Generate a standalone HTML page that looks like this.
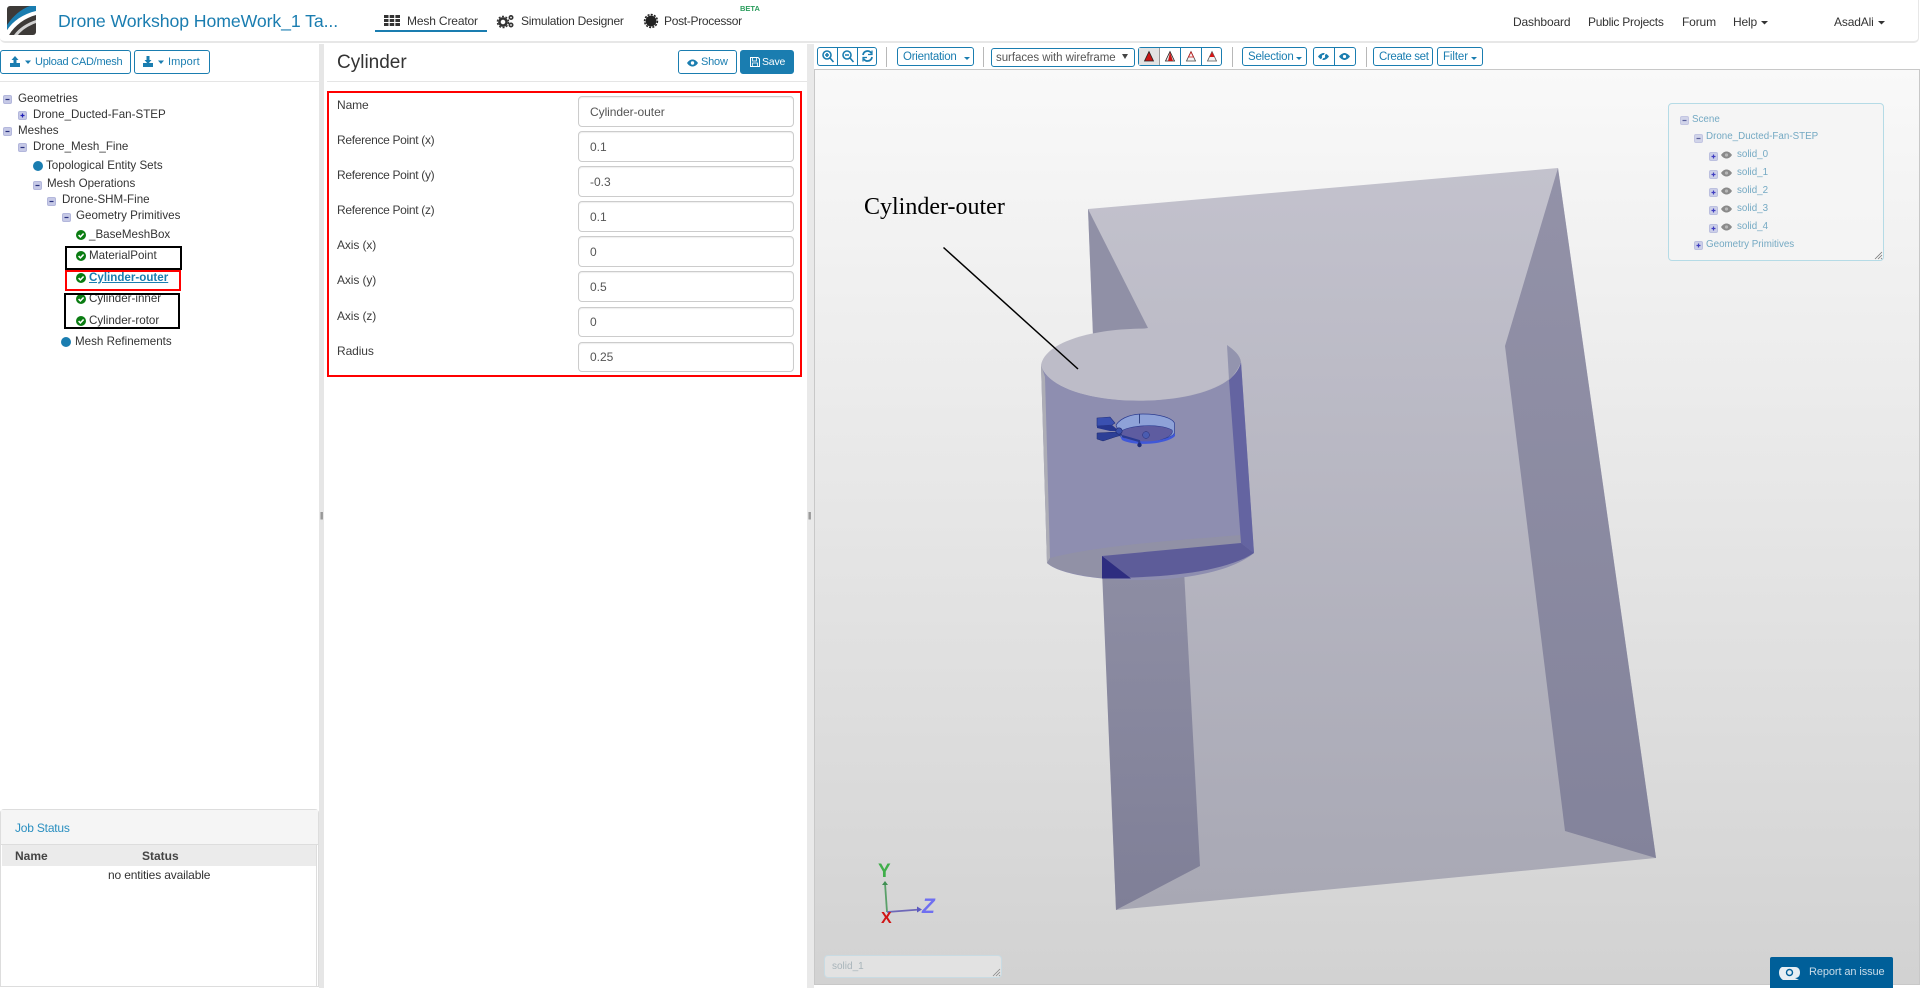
<!DOCTYPE html>
<html lang="en"><head><meta charset="utf-8"><title>Mesh Creator</title>
<style>
html,body{margin:0;padding:0;background:#fff;width:1920px;height:988px;overflow:hidden}
body{position:relative;font-family:"Liberation Sans",Arial,sans-serif;color:#333}
.a{position:absolute}
.t{position:absolute;white-space:nowrap;line-height:16px;font-size:11.6px;color:#333}
.l{font-size:12px;color:#3c3c3c;letter-spacing:-.1px}
.n{font-size:12px;color:#333;letter-spacing:-.15px}
.b{position:absolute;box-sizing:border-box;border:1px solid #1a7db0;border-radius:3px;background:#fff;color:#1a7db0;font-size:11px;white-space:nowrap}
.i{position:absolute;box-sizing:border-box;left:578px;width:216px;border:1px solid #ccc;border-radius:4px;background:#fff;box-shadow:inset 0 1px 1px rgba(0,0,0,.07);font-size:12px;color:#555;padding-left:11px}
.s{position:absolute;width:1px;height:20px;background:#b8b8b8;top:47px}
.tr{position:absolute;white-space:nowrap;line-height:14px;font-size:9.8px;color:#74a9c3}
.box{position:absolute;box-sizing:border-box;border:2px solid #000}
svg{position:absolute;overflow:visible}
</style></head><body>
<svg width="0" height="0" style="left:0;top:0"><defs>
<g id="mi"><rect x=".5" y=".5" width="8" height="8" rx="1.5" fill="#c6c9e6" stroke="#b3b7dc"/><path d="M2.5 4.5h4" stroke="#28307e" stroke-width="1.2"/></g>
<g id="pl"><rect x=".5" y=".5" width="8" height="8" rx="1.5" fill="#c6c9e6" stroke="#b3b7dc"/><path d="M2.5 4.5h4M4.5 2.5v4" stroke="#2220b8" stroke-width="1.2"/></g>
<g id="ck"><circle cx="5" cy="5" r="5" fill="#0a7c12"/><path d="M2.6 5.1l1.8 1.8 3.2-3.4" fill="none" stroke="#fff" stroke-width="1.6"/></g>
<g id="ey"><path d="M0 4C2 1 4 .5 5.5 .5S9 1 11 4C9 7 7 7.5 5.5 7.5S2 7 0 4z" fill="#8a8a8a"/><circle cx="5.5" cy="4" r="1.6" fill="#b8b8b8"/></g>
</defs></svg>

<!-- navbar -->
<div class="a" style="left:0;top:0;width:1919px;height:43px;box-sizing:border-box;border-bottom:2px solid #e7e7e7;border-right:1px solid #e7e7e7;border-radius:0 0 5px 5px"></div>
<svg style="left:7px;top:6px" width="29" height="29" viewBox="0 0 29 29"><rect width="29" height="29" rx="3" fill="#3d3a38"/><path d="M0 24C6 15 15 8 29 4v5C18 12 8 19 2 29H0z" fill="#fff"/><path d="M0 19C6 10 14 3 23 0h6v5C16 8 6 15 0 24z" fill="#1a7db0"/><path d="M7 29C12 22 20 17 29 14v3C21 20 15 24 11 29z" fill="#d0d0d0"/></svg>
<div class="t" style="left:58px;top:10px;line-height:22px;font-size:17.7px;color:#1a7db0;letter-spacing:-.1px">Drone Workshop HomeWork_1 Ta...</div>

<svg style="left:384px;top:15px" width="16" height="11" fill="#333"><path d="M0 0h4.5v3H0zM5.7 0h4.5v3H5.7zM11.4 0H16v3h-4.6zM0 4h4.5v3H0zM5.7 4h4.5v3H5.7zM11.4 4H16v3h-4.6zM0 8h4.5v3H0zM5.7 8h4.5v3H5.7zM11.4 8H16v3h-4.6z"/></svg>
<div class="t n" style="left:407px;top:13px;letter-spacing:-.15px">Mesh Creator</div>
<div class="a" style="left:375px;top:30px;width:112px;height:2px;background:#1a7db0"></div>
<svg style="left:497px;top:14px" width="17" height="14"><circle cx="6" cy="8" r="3.6" fill="none" stroke="#333" stroke-width="2.6"/><circle cx="6" cy="8" r="5.6" fill="none" stroke="#333" stroke-width="1.4" stroke-dasharray="2 1.6"/><circle cx="14" cy="3.5" r="1.7" fill="none" stroke="#333" stroke-width="1.6"/><circle cx="14" cy="11" r="1.7" fill="none" stroke="#333" stroke-width="1.6"/></svg>
<div class="t n" style="left:521px;top:13px;letter-spacing:-.25px">Simulation Designer</div>
<svg style="left:644px;top:14px" width="14" height="14"><circle cx="7" cy="7" r="5.4" fill="#222"/><circle cx="7" cy="7" r="6.4" fill="none" stroke="#222" stroke-width="1.6" stroke-dasharray="2 1.3"/></svg>
<div class="t n" style="left:664px;top:13px;letter-spacing:-.3px">Post-Processor</div>
<div class="t" style="left:740px;top:1px;font-size:7.5px;font-weight:bold;color:#2a9d5c">BETA</div>

<div class="t n" style="left:1513px;top:14px">Dashboard</div>
<div class="t n" style="left:1588px;top:14px;letter-spacing:-.25px">Public Projects</div>
<div class="t n" style="left:1682px;top:14px">Forum</div>
<div class="t n" style="left:1733px;top:14px">Help</div>
<svg style="left:1761px;top:21px" width="7" height="4"><path d="M0 0h7L3.5 3.5z" fill="#333"/></svg>
<div class="t n" style="left:1834px;top:14px">AsadAli</div>
<svg style="left:1878px;top:21px" width="7" height="4"><path d="M0 0h7L3.5 3.5z" fill="#333"/></svg>

<!-- dividers -->
<div class="a" style="left:319px;top:44px;width:5px;height:944px;background:#e6e6e6"></div>
<div class="a" style="left:807px;top:44px;width:7px;height:944px;background:#e9e9e9"></div>
<div class="t" style="left:320px;top:508px;font-size:8px;color:#555;letter-spacing:-1px">||</div>
<div class="t" style="left:808px;top:508px;font-size:8px;color:#555;letter-spacing:-1px">||</div>

<!-- left toolbar -->
<div class="b" style="left:0;top:50px;width:131px;height:24px;line-height:23px;padding-left:34px;letter-spacing:-.25px">Upload CAD/mesh</div>
<svg style="left:10px;top:56px" width="21" height="12" fill="#1a7db0"><path d="M0 7h10v4H0zM3.5 7V4H1.5L5 0l3.5 4H6.500v3z"/><path d="M15 4.500h6L18 8z"/></svg>
<div class="b" style="left:134px;top:50px;width:76px;height:24px;line-height:23px;padding-left:33px;letter-spacing:.1px">Import</div>
<svg style="left:143px;top:56px" width="21" height="12" fill="#1a7db0"><path d="M0 7h10v4H0zM3.5 0h3v4h2L5 8 1.500 4h2z"/><path d="M15 4.500h6L18 8z"/></svg>
<div class="a" style="left:0;top:81px;width:319px;height:1px;background:#e5e5e5"></div>

<!-- tree -->
<svg style="left:3px;top:95px" width="9" height="9"><use href="#mi"/></svg><div class="t" style="left:18px;top:91px">Geometries</div>
<svg style="left:18px;top:111px" width="9" height="9"><use href="#pl"/></svg><div class="t" style="left:33px;top:107px">Drone_Ducted-Fan-STEP</div>
<svg style="left:3px;top:127px" width="9" height="9"><use href="#mi"/></svg><div class="t" style="left:18px;top:123px">Meshes</div>
<svg style="left:18px;top:143px" width="9" height="9"><use href="#mi"/></svg><div class="t" style="left:33px;top:139px">Drone_Mesh_Fine</div>
<div class="a" style="left:33px;top:161px;width:10px;height:10px;border-radius:50%;background:#1a7db0"></div><div class="t" style="left:46px;top:158px">Topological Entity Sets</div>
<svg style="left:33px;top:181px" width="9" height="9"><use href="#mi"/></svg><div class="t" style="left:47px;top:176px">Mesh Operations</div>
<svg style="left:47px;top:197px" width="9" height="9"><use href="#mi"/></svg><div class="t" style="left:62px;top:192px">Drone-SHM-Fine</div>
<svg style="left:62px;top:213px" width="9" height="9"><use href="#mi"/></svg><div class="t" style="left:76px;top:208px">Geometry Primitives</div>
<svg style="left:76px;top:230px" width="10" height="10"><use href="#ck"/></svg><div class="t" style="left:89px;top:227px">_BaseMeshBox</div>
<svg style="left:76px;top:251px" width="10" height="10"><use href="#ck"/></svg><div class="t" style="left:89px;top:248px">MaterialPoint</div>
<svg style="left:76px;top:273px" width="10" height="10"><use href="#ck"/></svg><div class="t" style="left:89px;top:270px;font-weight:bold;color:#1a7db0;text-decoration:underline">Cylinder-outer</div>
<svg style="left:76px;top:294px" width="10" height="10"><use href="#ck"/></svg><div class="t" style="left:89px;top:291px">Cylinder-inner</div>
<svg style="left:76px;top:316px" width="10" height="10"><use href="#ck"/></svg><div class="t" style="left:89px;top:313px">Cylinder-rotor</div>
<div class="a" style="left:61px;top:337px;width:10px;height:10px;border-radius:50%;background:#1a7db0"></div><div class="t" style="left:75px;top:334px">Mesh Refinements</div>
<div class="box" style="left:65px;top:246px;width:117px;height:24px"></div>
<div class="box" style="left:65px;top:270px;width:116px;height:21px;border-color:#f00"></div>
<div class="box" style="left:64px;top:293px;width:116px;height:36px"></div>

<!-- job status -->
<div class="a" style="left:0;top:809px;width:319px;height:178px;box-sizing:border-box;border:1px solid #ddd;border-radius:4px 4px 0 0;background:#fff"></div>
<div class="a" style="left:1px;top:810px;width:317px;height:34px;background:#f5f5f5;border-bottom:1px solid #ddd"></div>
<div class="t" style="left:15px;top:820px;font-size:12px;color:#2a8fc0;letter-spacing:-.2px">Job Status</div>
<div class="a" style="left:2px;top:845px;width:314px;height:21px;background:#ebebeb"></div>
<div class="a" style="left:316px;top:845px;width:1px;height:141px;background:#ddd"></div>
<div class="t" style="left:15px;top:848px;font-size:12px;font-weight:bold;color:#444">Name</div>
<div class="t" style="left:142px;top:848px;font-size:12px;font-weight:bold;color:#444">Status</div>
<div class="t" style="left:108px;top:867px;font-size:12px;letter-spacing:-.15px">no entities available</div>

<!-- middle -->
<div class="t" style="left:337px;top:51px;line-height:24px;font-size:19px;color:#333">Cylinder</div>
<div class="b" style="left:678px;top:50px;width:59px;height:24px;line-height:23px;padding-left:22px;font-size:11px;letter-spacing:-.2px">Show</div>
<svg style="left:687px;top:59px" width="11" height="8"><path d="M0 4C2 1 4 .5 5.500 .5S9 1 11 4C9 7 7 7.500 5.500 7.500S2 7 0 4z" fill="#1a7db0"/><circle cx="5.500" cy="4" r="1.700" fill="#fff"/></svg>
<div class="b" style="left:740px;top:50px;width:54px;height:24px;line-height:23px;padding-left:21px;background:#1a7db0;color:#fff;font-size:10.5px;letter-spacing:-.2px">Save</div>
<svg style="left:750px;top:57px" width="10" height="10"><path d="M.5.500h7.500l1.500 1.500v7.500H.5z" fill="none" stroke="#fff"/><path d="M2.500 1v3h4V1M2.500 9V6h5v3" fill="none" stroke="#fff" stroke-width=".8"/></svg>
<div class="a" style="left:327px;top:81px;width:480px;height:1px;background:#e5e5e5"></div>
<div class="a" style="left:327px;top:91px;width:475px;height:286px;box-sizing:border-box;border:2px solid #f00"></div>

<div class="t l" style="left:337px;top:97px">Name</div>
<div class="t l" style="left:337px;top:132px;letter-spacing:-.32px">Reference Point (x)</div>
<div class="t l" style="left:337px;top:167px;letter-spacing:-.32px">Reference Point (y)</div>
<div class="t l" style="left:337px;top:202px;letter-spacing:-.32px">Reference Point (z)</div>
<div class="t l" style="left:337px;top:237px">Axis (x)</div>
<div class="t l" style="left:337px;top:272px">Axis (y)</div>
<div class="t l" style="left:337px;top:308px">Axis (z)</div>
<div class="t l" style="left:337px;top:343px">Radius</div>

<div class="i" style="top:96px;height:31px;line-height:30px;letter-spacing:-.05px">Cylinder-outer</div>
<div class="i" style="top:131px;height:31px;line-height:30px">0.1</div>
<div class="i" style="top:166px;height:31px;line-height:30px">-0.3</div>
<div class="i" style="top:201px;height:31px;line-height:30px">0.1</div>
<div class="i" style="top:236px;height:31px;line-height:30px">0</div>
<div class="i" style="top:271px;height:31px;line-height:30px">0.5</div>
<div class="i" style="top:307px;height:30px;line-height:29px">0</div>
<div class="i" style="top:342px;height:30px;line-height:29px">0.25</div>

<!-- viewer toolbar -->
<div class="b" style="left:817px;top:47px;width:60px;height:19px"></div>
<div class="a" style="left:837px;top:47px;width:1px;height:19px;background:#1a7db0"></div>
<div class="a" style="left:857px;top:47px;width:1px;height:19px;background:#1a7db0"></div>
<svg style="left:822px;top:50px" width="12" height="13" fill="none" stroke="#1a7db0" stroke-width="1.600"><circle cx="5" cy="5" r="4"/><path d="M8 8l3.500 4M3 5h4M5 3v4"/></svg>
<svg style="left:842px;top:50px" width="12" height="13" fill="none" stroke="#1a7db0" stroke-width="1.600"><circle cx="5" cy="5" r="4"/><path d="M8 8l3.500 4M3 5h4"/></svg>
<svg style="left:862px;top:50px" width="11" height="12" fill="none" stroke="#1a7db0" stroke-width="1.800"><path d="M1 5A4.500 4.500 0 0 1 9.500 3.500M10 7A4.500 4.500 0 0 1 1.500 8.500"/><path d="M10 .5v4H6M1 11.500v-4h4" stroke-width="1.200"/></svg>
<div class="s" style="left:886px"></div>
<div class="b" style="left:897px;top:47px;width:77px;height:19px;line-height:19px;padding-left:5px;font-size:11.500px;letter-spacing:-.25px">Orientation</div>
<svg style="left:964px;top:57px" width="6" height="3"><path d="M0 0h6L3 3z" fill="#1a7db0"/></svg>
<div class="s" style="left:983px"></div>
<div class="b" style="left:991px;top:48px;width:144px;height:19px;line-height:18px;padding-left:4px;font-size:11.500px;color:#555;letter-spacing:-.05px">surfaces with wireframe</div>
<svg style="left:1122px;top:54px" width="6" height="5"><path d="M0 0h6L3 5z" fill="#444"/></svg>

<div class="b" style="left:1138px;top:47px;width:84px;height:19px;border-color:#1a7db0"></div>
<div class="a" style="left:1139px;top:48px;width:20px;height:17px;background:#e3e3e3;border-right:1px solid #999"></div>
<div class="a" style="left:1180px;top:47px;width:1px;height:19px;background:#1a7db0"></div>
<div class="a" style="left:1201px;top:47px;width:1px;height:19px;background:#1a7db0"></div>
<svg style="left:1144px;top:51px" width="10" height="11"><path d="M5 .5L9.500 10H.5z" fill="#c81616" stroke="#222" stroke-width=".8"/></svg>
<svg style="left:1165px;top:51px" width="10" height="11"><path d="M5 .5L9.500 10H.5z" fill="#eee" stroke="#222" stroke-width=".8"/><path d="M5 1L8 10H3z" fill="#c81616"/></svg>
<svg style="left:1186px;top:51px" width="10" height="11"><path d="M5 .5L9.500 10H.5z" fill="#f4f4f4" stroke="#444" stroke-width=".8"/><path d="M5 1L2.500 6h5z" fill="none" stroke="#c81616" stroke-width=".8"/></svg>
<svg style="left:1207px;top:51px" width="10" height="11"><path d="M5 .5L9.500 10H.5z" fill="#f2f2f2" stroke="#555" stroke-width=".8"/><path d="M5 1L7.500 6h-5z" fill="#d91515"/></svg>
<div class="s" style="left:1232px"></div>
<div class="b" style="left:1242px;top:47px;width:65px;height:19px;line-height:19px;padding-left:5px;font-size:11.500px;letter-spacing:-.2px">Selection</div>
<svg style="left:1296px;top:57px" width="6" height="3"><path d="M0 0h6L3 3z" fill="#1a7db0"/></svg>
<div class="b" style="left:1313px;top:47px;width:43px;height:19px"></div>
<div class="a" style="left:1334px;top:47px;width:1px;height:19px;background:#1a7db0"></div>
<svg style="left:1318px;top:52px" width="11" height="9"><path d="M0 4.500C2 2 4 1 5.500 1S9 2 11 4.500C9 7 7 8 5.500 8S2 7 0 4.500z" fill="#1a7db0"/><circle cx="5.500" cy="4.500" r="1.600" fill="#fff"/><path d="M8 .5L3 8.500" stroke="#fff" stroke-width="1.200"/></svg>
<svg style="left:1339px;top:52px" width="11" height="9"><path d="M0 4.500C2 2 4 1 5.500 1S9 2 11 4.500C9 7 7 8 5.500 8S2 7 0 4.500z" fill="#1a7db0"/><circle cx="5.500" cy="4.500" r="1.600" fill="#fff"/></svg>
<div class="s" style="left:1366px"></div>
<div class="b" style="left:1373px;top:47px;width:60px;height:19px;line-height:19px;padding-left:5px;font-size:11.500px;letter-spacing:-.35px">Create set</div>
<div class="b" style="left:1437px;top:47px;width:46px;height:19px;line-height:19px;padding-left:5px;font-size:11.500px;letter-spacing:-.1px">Filter</div>
<svg style="left:1471px;top:57px" width="6" height="3"><path d="M0 0h6L3 3z" fill="#1a7db0"/></svg>

<!-- viewer -->
<div class="a" style="left:814px;top:69px;width:1106px;height:916px;box-sizing:border-box;border:1px solid #c8c8c8;background:linear-gradient(#f9f9f9,#d2d2d2)"></div>

<svg style="left:0;top:0" width="1920" height="988">
<defs>
<linearGradient id="wall" gradientUnits="userSpaceOnUse" x1="0" y1="168" x2="0" y2="910"><stop offset="0" stop-color="#c3c2cd"/><stop offset="1" stop-color="#a8a8b4"/></linearGradient>
<linearGradient id="rw" gradientUnits="userSpaceOnUse" x1="0" y1="168" x2="0" y2="858"><stop offset="0" stop-color="#9392a8"/><stop offset="1" stop-color="#83839b"/></linearGradient>
<linearGradient id="st" gradientUnits="userSpaceOnUse" x1="0" y1="577" x2="0" y2="910"><stop offset="0" stop-color="#8d8da3"/><stop offset="1" stop-color="#7f7f97"/></linearGradient>
</defs>
<!-- box -->
<path d="M1088 209L1558 168L1656 858L1116 910z" fill="url(#wall)"/>
<path d="M1088 209L1148 328L1093 336z" fill="#9090a6"/>
<path d="M1558 168L1505 346L1565 831L1656 858z" fill="url(#rw)"/>
<path d="M1102 570L1184 570L1200 866L1116 910z" fill="url(#st)"/>
<!-- cylinder -->
<path d="M1041 365L1047 563C1070 585 1210 590 1254 553L1241 362C1230 413 1055 413 1041 365z" fill="#8e8eb0"/>
<path d="M1041 365L1045 377L1050 558L1047 563z" fill="#adadb6"/>
<path d="M1050 558C1100 545 1180 540 1241 535L1241 543L1102 556L1102 578C1075 575 1055 570 1047 563z" fill="#9191a6"/>
<path d="M1229 380C1235 375 1240 368 1241 362L1254 553L1241 543z" fill="#6464a1"/>
<path d="M1102 556L1241 543L1254 553C1225 572 1165 578 1102 578z" fill="#5d5c99"/>
<path d="M1102 556L1131 578.500L1102 578.500z" fill="#2e2d80"/>
<path d="M1041 365C1050 318 1230 316 1241 362C1225 413 1055 413 1041 365z" fill="#bdbcc8"/>
<path d="M1227 345C1234 350 1240 355 1241 362C1238 370 1233 376 1229 380z" fill="#9394ae"/>
<!-- drone model -->
<path d="M1116 425C1122 416 1135 414 1143 414C1160 414 1172 418 1174.500 423V433C1170 442 1130 444 1120 436z" fill="#8ea2d8" stroke="#2c3c90" stroke-width=".7"/>
<path d="M1139.500 414.500v9" stroke="#1c2c70" stroke-width=".8"/>
<path d="M1120 432C1128 425 1160 423 1172 430C1175 436 1160 442 1143 443C1130 443 1122 439 1120 432z" fill="#5e5ca0" stroke="#2c3c90" stroke-width=".6"/>
<path d="M1120 436C1135 445 1168 442 1175 433V436C1168 444 1135 447 1122 440z" fill="#4058d8"/>
<path d="M1097 418L1110 417L1115 423L1112 425L1097 426z" fill="#3a50b0" stroke="#22307c" stroke-width=".6"/>
<path d="M1097 426L1112 425L1119 431L1110 431L1097 428z" fill="#26368e"/>
<path d="M1097 433L1117 432L1122 435L1115 437L1103 441L1097 439z" fill="#2d3f96" stroke="#1f2c70" stroke-width=".5"/>
<circle cx="1119" cy="431" r="3.200" fill="#3a4fa8" stroke="#1e2a70" stroke-width=".6"/>
<circle cx="1146" cy="435" r="3.400" fill="#4a5cb0" stroke="#222f7a" stroke-width=".5"/>
<path d="M1122 436L1139 441L1140 446" stroke="#2a3a90" stroke-width="2.200" fill="none"/>
<circle cx="1139.500" cy="445" r="2.200" fill="#1e2c78"/>
<!-- annotation -->
<path d="M943.500 247.500L1078 369" stroke="#000" stroke-width="1.500"/>
<text x="864" y="214" font-family="'Liberation Serif',serif" font-size="24px" fill="#000">Cylinder-outer</text>
<!-- axes -->
<path d="M887 912L885 883" stroke="#5aa069" stroke-width="1.800"/><path d="M885 881l-3 4h6z" fill="#3f8f52"/>
<path d="M887 912L920 909.500" stroke="#6e68b8" stroke-width="1.800"/><path d="M922 909.500l-5-3v6z" fill="#5c5ac0"/>
<text x="878" y="877" font-family="'Liberation Sans',sans-serif" font-size="19px" font-weight="bold" fill="#3fae4a">Y</text>
<text x="922" y="913" font-family="'Liberation Sans',sans-serif" font-size="21px" font-weight="bold" font-style="italic" fill="#6f6ff0">Z</text>
<text x="881" y="923" font-family="'Liberation Sans',sans-serif" font-size="16px" font-weight="bold" fill="#d01515">X</text>
</svg>

<!-- scene tree -->
<div class="a" style="left:1668px;top:103px;width:216px;height:158px;box-sizing:border-box;border:1px solid #b5dbe6;border-radius:4px;background:rgba(245,245,245,.85)"></div>
<svg style="left:1680px;top:116px" width="9" height="9" opacity=".75"><use href="#mi"/></svg><div class="tr" style="left:1692px;top:113px">Scene</div>
<svg style="left:1694px;top:134px" width="9" height="9" opacity=".75"><use href="#mi"/></svg><div class="tr" style="left:1706px;top:130px">Drone_Ducted-Fan-STEP</div>
<svg style="left:1709px;top:152px" width="9" height="9" opacity=".85"><use href="#pl"/></svg><svg style="left:1721px;top:151px" width="11" height="8"><use href="#ey"/></svg><div class="tr" style="left:1737px;top:148px">solid_0</div>
<svg style="left:1709px;top:170px" width="9" height="9" opacity=".85"><use href="#pl"/></svg><svg style="left:1721px;top:169px" width="11" height="8"><use href="#ey"/></svg><div class="tr" style="left:1737px;top:166px">solid_1</div>
<svg style="left:1709px;top:188px" width="9" height="9" opacity=".85"><use href="#pl"/></svg><svg style="left:1721px;top:187px" width="11" height="8"><use href="#ey"/></svg><div class="tr" style="left:1737px;top:184px">solid_2</div>
<svg style="left:1709px;top:206px" width="9" height="9" opacity=".85"><use href="#pl"/></svg><svg style="left:1721px;top:205px" width="11" height="8"><use href="#ey"/></svg><div class="tr" style="left:1737px;top:202px">solid_3</div>
<svg style="left:1709px;top:224px" width="9" height="9" opacity=".85"><use href="#pl"/></svg><svg style="left:1721px;top:223px" width="11" height="8"><use href="#ey"/></svg><div class="tr" style="left:1737px;top:220px">solid_4</div>
<svg style="left:1694px;top:241px" width="9" height="9" opacity=".85"><use href="#pl"/></svg><div class="tr" style="left:1706px;top:238px">Geometry Primitives</div>
<svg style="left:1875px;top:252px" width="8" height="8" stroke="#777" stroke-width=".8"><path d="M0 7L7 0M3 7L7 3M6 7L7 6"/></svg>

<!-- solid label -->
<div class="a" style="left:824px;top:955px;width:178px;height:23px;box-sizing:border-box;border:1px solid #c8dbe3;border-radius:4px;background:#e2e2e2"></div>
<div class="tr" style="left:832px;top:960px;font-size:10px;color:#a8b4ba">solid_1</div>
<svg style="left:993px;top:969px" width="8" height="8" stroke="#888" stroke-width=".8"><path d="M0 7L7 0M3 7L7 3M6 7L7 6"/></svg>

<!-- report -->
<div class="a" style="left:1770px;top:957px;width:123px;height:31px;background:#005f99;border-radius:2px 2px 0 0"></div>
<svg style="left:1779px;top:966px" width="21" height="14"><path d="M3 1H16C20 1 21 4 21 6.500S20 12 16 12L20 14H4C1 12 0 9 0 6.500S1 2 3 1z" fill="#e6eef4"/><circle cx="10.500" cy="6.500" r="3" fill="none" stroke="#005f99" stroke-width="1.400"/></svg>
<div class="t" style="left:1809px;top:964px;font-size:11px;color:#c9dce9;letter-spacing:-.1px">Report an issue</div>
</body></html>
